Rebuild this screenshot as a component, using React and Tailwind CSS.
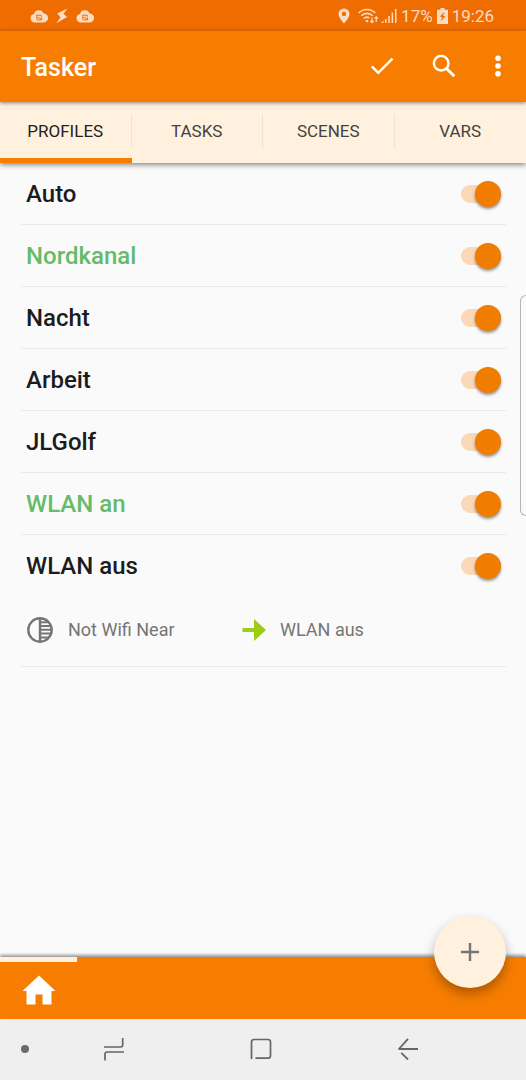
import { useState } from "react";

const TABS = ["PROFILES", "TASKS", "SCENES", "VARS"];

const PROFILES = [
  { name: "Auto" },
  { name: "Nordkanal", active: true },
  { name: "Nacht" },
  { name: "Arbeit" },
  { name: "JLGolf" },
  { name: "WLAN an", active: true },
  { name: "WLAN aus", context: "Not Wifi Near", task: "WLAN aus" },
];

function CloudSync() {
  return (
    <svg width="18" height="14" viewBox="0 0 18 14" aria-hidden="true">
      <path d="M4.200 13.400a4.200 4.200 0 0 1-.2-8.300A5 5 0 0 1 13.600 4.600a4.400 4.400 0 0 1 .2 8.800z" fill="#fbdcc2" />
      <path d="M6.600 7.800V6.200h4.600v1.600M11.600 8.600v2.300H7M6.600 10.300V8.800l2-.4 1.600 1.200h1.400" fill="none" stroke="#ef6c00" strokeWidth="1" />
    </svg>
  );
}

function StatusBar() {
  return (
    <div className="flex h-[31px] shrink-0 items-center justify-between bg-[#ef6c00] pl-[30px] pr-8 text-[#fbdcc2]">
      <div className="flex items-center gap-2">
        <CloudSync />
        <svg width="12" height="16" viewBox="0 0 12 16" fill="currentColor" aria-hidden="true">
          <path d="M11.500 .5 1.200 5.600l3.300 3.600L.3 15.300l10.900-6.200-3.700-3.400z" />
        </svg>
        <CloudSync />
      </div>
      <div className="flex items-center gap-1 text-[17px] leading-5">
        <svg className="mr-1" width="12" height="16" viewBox="0 0 12 16" fill="currentColor" aria-hidden="true">
          <path fillRule="evenodd" d="M6 .5a5.500 5.500 0 0 0-5.500 5.500C.5 9.600 6 15.500 6 15.500S11.500 9.600 11.500 6A5.500 5.500 0 0 0 6 .5zm0 3.200a2.200 2.200 0 1 1 0 4.400 2.200 2.200 0 0 1 0-4.400z" />
        </svg>
        <div className="flex items-center gap-0.5">
          <svg width="21" height="16" viewBox="0 0 21 16" fill="none" stroke="currentColor" strokeWidth="1.600" aria-hidden="true">
            <path d="M.7 5a11.500 11.500 0 0 1 16.600 0M3.300 7.800a8 8 0 0 1 11.400 0M5.900 10.500a4.400 4.400 0 0 1 5.400-.6" />
            <circle cx="9" cy="13" r="1.300" fill="currentColor" stroke="none" />
            <path strokeWidth="1.200" d="M14 9.500v5M12.200 12.800l1.800 1.900 1.800-1.900M18.300 14V9M16.500 10.700l1.800-1.900 1.800 1.900" />
          </svg>
          <svg width="16" height="16" viewBox="0 0 16 16" fill="currentColor" aria-hidden="true">
            <path d="M0 15l2.500-2.500V15zM4 11h1.500v4H4zM7.300 8h1.500v7H7.300zM10.600 4.500h1.500V15h-1.500zM14 1h1.500v14H14z" />
          </svg>
        </div>
        <span>17%</span>
        <svg width="11" height="16" viewBox="0 0 11 16" aria-hidden="true">
          <path d="M3.500 0h4v1.800H11V16H0V1.800h3.500z" fill="#fbdcc2" />
          <path d="M7.500 3.500 3 8.500l2.200.8L3.500 13.500l4.700-5-2.200-.8z" fill="#ef6c00" />
        </svg>
        <span>19:26</span>
      </div>
    </div>
  );
}

function AppBar() {
  return (
    <header className="relative z-20 flex h-[71px] shrink-0 items-center bg-[#f77d00] pl-[21px] pr-3 text-white shadow-[0_1px_4px_rgba(0,0,0,0.45)]">
      <h1 className="flex-1 pt-0.5 text-[25px] font-medium leading-8">Tasker</h1>
      <div className="flex items-center pb-0.5">
        <button type="button" aria-label="Apply" className="flex h-12 w-[62px] items-center justify-center">
          <svg width="24" height="20" viewBox="0 0 24 20" fill="none" stroke="currentColor" strokeWidth="2.500" aria-hidden="true">
            <path d="M1.800 10.300 8.300 16.800 22.500 2.600" />
          </svg>
        </button>
        <button type="button" aria-label="Search" className="flex h-12 w-[62px] items-center justify-center">
          <svg width="24" height="24" viewBox="0 0 24 24" fill="none" stroke="currentColor" aria-hidden="true">
            <circle cx="9.200" cy="9.200" r="7.300" strokeWidth="2.400" />
            <path d="M14.500 14.500 22.300 22.300" strokeWidth="3" />
          </svg>
        </button>
        <button type="button" aria-label="More options" className="ml-[7px] flex h-12 w-8 items-center justify-center">
          <svg width="6" height="22" viewBox="0 0 6 22" fill="currentColor" aria-hidden="true">
            <circle cx="3" cy="3.200" r="2.800" />
            <circle cx="3" cy="11" r="2.800" />
            <circle cx="3" cy="18.800" r="2.800" />
          </svg>
        </button>
      </div>
    </header>
  );
}

function Tabs() {
  const [current, setCurrent] = useState("PROFILES");
  return (
    <div role="tablist" className="relative z-10 grid h-[61px] shrink-0 grid-cols-4 bg-[#fff1de] shadow-[0_2px_5px_rgba(0,0,0,0.45)]">
      {TABS.map((tab, i) => (
        <button
          key={tab}
          type="button"
          role="tab"
          aria-selected={tab === current}
          onClick={() => setCurrent(tab)}
          className={
            tab === current
              ? "flex flex-col border-b-[5px] border-[#f77d00] pt-3 text-[17px] leading-[34px] text-[#212121]"
              : "flex flex-col border-b-[5px] border-transparent pt-3 text-[17px] leading-[34px] text-[#424242]"
          }
        >
          <span className={i < 3 ? "w-full border-r border-[#ece3d6]" : "w-full"}>{tab}</span>
        </button>
      ))}
    </div>
  );
}

function Switch({ id }) {
  const [on, setOn] = useState(true);
  return (
    <input
      id={id}
      type="checkbox"
      role="switch"
      checked={on}
      onChange={() => setOn(!on)}
      className="flex h-[18px] w-10 cursor-pointer appearance-none items-center rounded-full bg-gray-300 before:size-[26px] before:shrink-0 before:rounded-full before:bg-gray-50 before:shadow-[0_2px_3px_rgba(0,0,0,0.4)] before:content-[''] checked:justify-end checked:bg-[#fad8b8] checked:before:bg-[#f07c00]"
    />
  );
}

function Profile({ profile, index }) {
  const id = `profile-${index}`;
  return (
    <li className="border-b border-[#e9e9e9] px-[5px]">
      <div className="flex h-[61px] items-center justify-between">
        <label
          htmlFor={id}
          className={profile.active ? "pt-px text-2xl font-medium text-[#66bb6a]" : "pt-px text-2xl font-medium text-[#1c1c1c]"}
        >
          {profile.name}
        </label>
        <Switch id={id} />
      </div>
      {profile.context && (
        <div className="grid grid-cols-[216px_1fr] pb-5 pt-[18px] text-lg leading-8 text-[#757575]">
          <div className="flex items-center gap-[15px]">
            <svg className="ml-px" width="26" height="26" viewBox="0 0 26 26" fill="none" stroke="currentColor" aria-hidden="true">
              <circle cx="13" cy="13" r="11.700" strokeWidth="2.400" />
              <path d="M13 1.500v23" strokeWidth="2.400" />
              <path d="M13 5.200h8M13 9h11M13 12.800h12M13 16.600h11M13 20.400h8.500" strokeWidth="2" />
            </svg>
            <span>{profile.context}</span>
          </div>
          <div className="flex items-center gap-[14px]">
            <svg width="24" height="22" viewBox="0 0 24 22" fill="#9ccc14" aria-hidden="true">
              <path d="M.5 9H12V0l12 11-12 11v-9H.5z" />
            </svg>
            <span>{profile.task}</span>
          </div>
        </div>
      )}
    </li>
  );
}

function NavBar() {
  return (
    <nav aria-label="System" className="flex h-[61px] shrink-0 items-center bg-[#efefef] pb-0.5 pr-[45px] text-[#666666]">
      <button type="button" aria-label="Pin navigation bar" className="flex h-full w-10 items-center justify-end pr-[11px]">
        <span className="size-2 rounded-full bg-[#6b6b6b]" />
      </button>
      <div className="grid h-full flex-1 grid-cols-3">
        <button type="button" aria-label="Recent apps" className="flex items-center justify-center">
          <svg width="22" height="24" viewBox="0 0 22 24" fill="none" stroke="currentColor" strokeWidth="1.700" aria-hidden="true">
            <path d="M1 10h16.500q2.200 0 2.200-2.200V1M21 15H4.200Q2 15 2 17.200V23.500" />
          </svg>
        </button>
        <button type="button" aria-label="Home" className="flex items-center justify-center">
          <svg width="22" height="22" viewBox="0 0 22 22" fill="none" stroke="currentColor" strokeWidth="1.700" aria-hidden="true">
            <path d="M1.500 21V4q0-2.500 2.500-2.500h14q2.500 0 2.500 2.500v13.500q0 2.700-2.500 2.700H5.500" />
          </svg>
        </button>
        <button type="button" aria-label="Back" className="flex items-center justify-center">
          <svg width="22" height="22" viewBox="0 0 22 22" fill="none" stroke="currentColor" strokeWidth="1.800" aria-hidden="true">
            <path d="M21 11H1.800M1.500 11.500 11 .8M4.300 14.800 11 21.500" />
          </svg>
        </button>
      </div>
    </nav>
  );
}

export default function App() {
  return (
    <div className="relative flex min-h-screen flex-col overflow-hidden bg-[#fafafa] font-['Roboto',sans-serif]">
      <StatusBar />
      <AppBar />
      <Tabs />
      <main className="flex-1 pl-[21px] pr-5">
        <ul>
          {PROFILES.map((profile, i) => (
            <Profile key={profile.name} profile={profile} index={i} />
          ))}
        </ul>
      </main>
      <footer className="relative flex h-[62px] shrink-0 bg-[#f77d00] shadow-[0_-2px_3px_rgba(0,0,0,0.4)]">
        <button type="button" aria-label="Home project" className="flex w-[77px] items-center justify-center border-t-[5px] border-[#fff1de] pb-0.5 text-white">
          <svg width="34" height="30" viewBox="0 0 34 30" fill="currentColor" aria-hidden="true">
            <path d="M17 .5 33.500 16H29.500V29.500H20.500V19.500H13.500V29.500H4.500V16H.5z" />
          </svg>
        </button>
        <button
          type="button"
          aria-label="Add profile"
          className="absolute -top-[41px] right-5 flex size-[72px] items-center justify-center rounded-full bg-[#fff1de] text-[#757575] shadow-[0_6px_12px_rgba(0,0,0,0.3)]"
        >
          <svg width="18" height="18" viewBox="0 0 18 18" fill="none" stroke="currentColor" strokeWidth="2.400" aria-hidden="true">
            <path d="M9 0v18M0 9h18" />
          </svg>
        </button>
      </footer>
      <NavBar />
      <div aria-hidden="true" className="absolute right-0 top-[295px] h-[221px] w-1.5 rounded-l-lg border border-r-0 border-[#b5b5b5] bg-[#fafafa]" />
    </div>
  );
}
